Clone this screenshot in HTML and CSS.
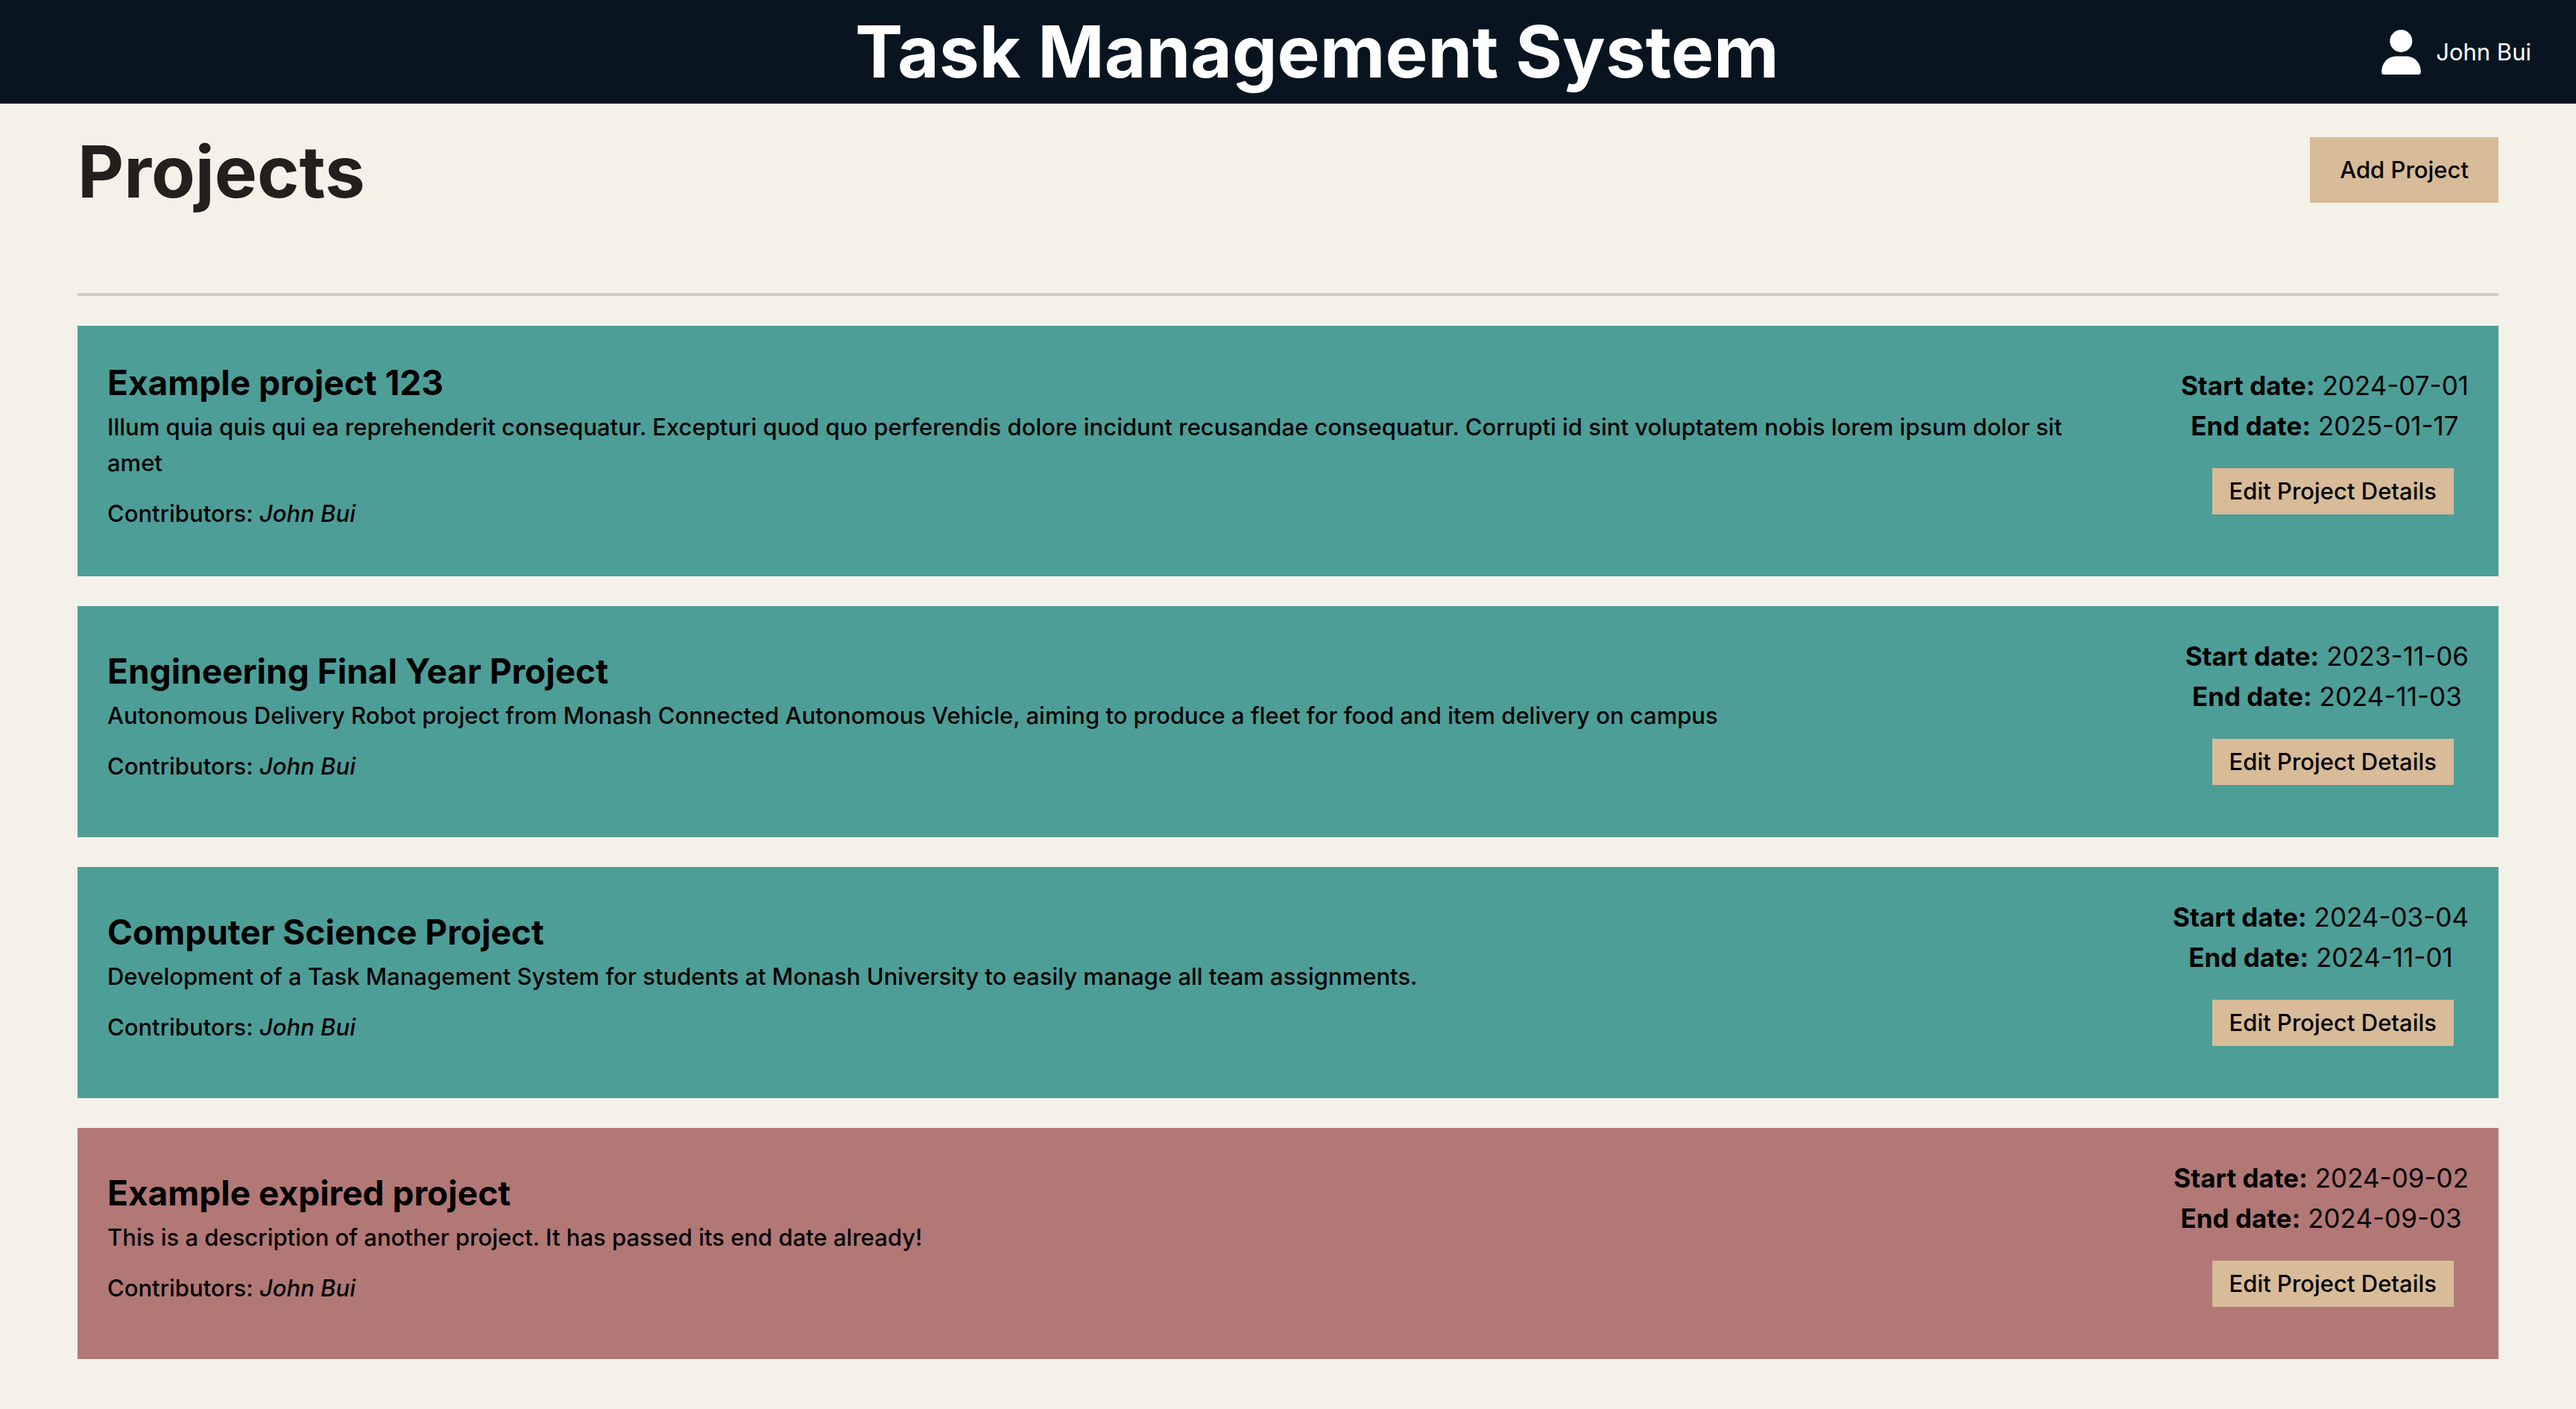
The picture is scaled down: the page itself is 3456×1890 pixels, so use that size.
FILE: index.html
```html
<!DOCTYPE html>
<html lang="en">
<head>
<meta charset="utf-8">
<title>Task Management System</title>
<link rel="stylesheet" href="styles.css">
</head>
<body>
<header class="topbar">
  <h1 class="brand">Task Management System</h1>
  <a class="user" href="#account">
    <svg class="user-icon" viewBox="0 0 53 60" aria-hidden="true">
      <circle cx="26.300" cy="15" r="15"/>
      <path d="M20 35.500H33C45 35.500 52.800 45 52.800 56.500Q52.800 60 49.500 60H3.500Q.2 60 .2 56.500C.2 45 8 35.500 20 35.500Z"/>
    </svg>
    <span>John Bui</span>
  </a>
</header>
<main class="page">
  <div class="page-head">
    <h2 class="page-title">Projects</h2>
    <button class="btn btn-add" type="button">Add Project</button>
  </div>
  <section class="projects">
    <article class="card">
      <div class="info">
        <h3 class="name">Example project 123</h3>
        <p class="desc">Illum quia quis qui ea reprehenderit consequatur. Excepturi quod quo perferendis dolore incidunt recusandae consequatur. Corrupti id sint voluptatem nobis lorem ipsum dolor sit amet</p>
        <p class="people">Contributors: <em>John Bui</em></p>
      </div>
      <div class="side">
        <p class="date"><strong>Start date:</strong> 2024-07-01</p>
        <p class="date"><strong>End date:</strong> 2025-01-17</p>
        <button class="btn btn-edit" type="button">Edit Project Details</button>
      </div>
    </article>
    <article class="card">
      <div class="info">
        <h3 class="name">Engineering Final Year Project</h3>
        <p class="desc">Autonomous Delivery Robot project from Monash Connected Autonomous Vehicle, aiming to produce a fleet for food and item delivery on campus</p>
        <p class="people">Contributors: <em>John Bui</em></p>
      </div>
      <div class="side">
        <p class="date"><strong>Start date:</strong> 2023-11-06</p>
        <p class="date"><strong>End date:</strong> 2024-11-03</p>
        <button class="btn btn-edit" type="button">Edit Project Details</button>
      </div>
    </article>
    <article class="card">
      <div class="info">
        <h3 class="name">Computer Science Project</h3>
        <p class="desc">Development of a Task Management System for students at Monash University to easily manage all team assignments.</p>
        <p class="people">Contributors: <em>John Bui</em></p>
      </div>
      <div class="side">
        <p class="date"><strong>Start date:</strong> 2024-03-04</p>
        <p class="date"><strong>End date:</strong> 2024-11-01</p>
        <button class="btn btn-edit" type="button">Edit Project Details</button>
      </div>
    </article>
    <article class="card card-expired">
      <div class="info">
        <h3 class="name">Example expired project</h3>
        <p class="desc">This is a description of another project. It has passed its end date already!</p>
        <p class="people">Contributors: <em>John Bui</em></p>
      </div>
      <div class="side">
        <p class="date"><strong>Start date:</strong> 2024-09-02</p>
        <p class="date"><strong>End date:</strong> 2024-09-03</p>
        <button class="btn btn-edit" type="button">Edit Project Details</button>
      </div>
    </article>
  </section>
</main>
</body>
</html>
```
FILE: styles.css
```css
* {
  box-sizing: border-box;
  margin: 0;
}

body {
  background: #f4f1e9;
  color: #000;
  font: 400 31px/48px Inter, "Liberation Sans", sans-serif;
}

.topbar {
  display: grid;
  grid-template-columns: 1fr auto 1fr;
  align-items: center;
  padding: 0 60px 0 138px;
  min-height: 139px;
  background: #081520;
  color: #fff;
}

.brand {
  grid-column: 2;
  font-size: 96px;
  line-height: 139px;
}

.user {
  display: flex;
  align-items: center;
  justify-self: end;
  gap: 20px;
  color: inherit;
  text-decoration: none;
}

.user-icon {
  width: 53px;
  height: 60px;
  fill: #fff;
}

.page {
  padding: 40px 104px;
}

.page-head {
  display: flex;
  justify-content: space-between;
  align-items: flex-start;
  padding: 5px 0 117px;
  border-bottom: 4px solid #ccc;
}

.page-title {
  color: #221f1d;
  font-size: 96px;
  line-height: 92px;
}

.btn {
  border: 0;
  background: #d8bb98;
  color: #000;
  font: inherit;
  font-weight: 500;
}

.btn-add {
  padding: 20px 40px;
}

.btn-edit {
  align-self: flex-end;
  margin: 30px 20px;
  padding: 7px 23px;
}

.projects {
  display: flex;
  flex-direction: column;
  gap: 40px;
  padding-top: 40px;
}

.card {
  display: flex;
  align-items: center;
  justify-content: space-between;
  gap: 80px;
  padding: 40px;
  background: #4e9e98;
}

.card-expired {
  background: #b27876;
}

.info {
  font-weight: 500;
}

.name {
  font-size: 46px;
  line-height: 72px;
}

.people {
  margin: 20px 0;
}

.side {
  display: flex;
  flex: none;
  flex-direction: column;
  text-align: center;
}

.date {
  font-size: 35px;
  line-height: 54px;
}
```
